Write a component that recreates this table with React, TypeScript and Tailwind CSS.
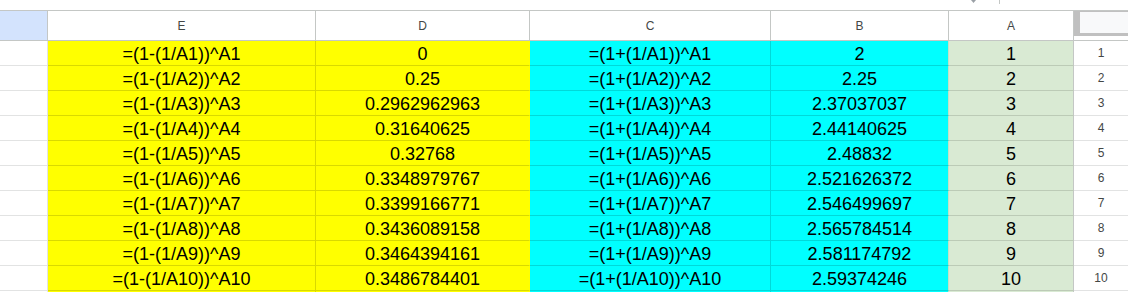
import React from "react";

const dVals = [
  "0",
  "0.25",
  "0.2962962963",
  "0.31640625",
  "0.32768",
  "0.3348979767",
  "0.3399166771",
  "0.3436089158",
  "0.3464394161",
  "0.3486784401",
];
const bVals = [
  "2",
  "2.25",
  "2.37037037",
  "2.44140625",
  "2.48832",
  "2.521626372",
  "2.546499697",
  "2.565784514",
  "2.581174792",
  "2.59374246",
];

const font = { fontFamily: '"Liberation Sans", Arial, sans-serif' };

function Row({ i, last }: { i: number; last?: boolean }) {
  const n = i + 1;
  const txt = "flex justify-center pt-[2px] leading-[22px] text-[18px] text-black whitespace-nowrap";
  return (
    <div className={last ? "flex h-[25px] shrink-0" : "flex h-[25px] shrink-0"}>
      <div className="w-[48px] shrink-0 bg-white border-r border-b border-[#e2e3e3]" />
      <div className={`w-[268px] shrink-0 bg-[#ffff00] border-r border-b border-[#d9d900] ${txt}`}>
        {last ? "" : `=(1-(1/A${n}))^A${n}`}
      </div>
      <div className={`w-[214px] shrink-0 bg-[#ffff00] border-b border-[#d9d900] border-r border-r-[#ffff00] ${txt}`}>
        {last ? "" : dVals[i]}
      </div>
      <div className={`w-[241px] shrink-0 bg-[#00ffff] border-r border-b border-[#00d9d9] ${txt}`}>
        {last ? "" : `=(1+(1/A${n}))^A${n}`}
      </div>
      <div className={`w-[178px] shrink-0 bg-[#00ffff] border-b border-[#00d9d9] border-r border-r-[#c6e0c2] ${txt}`}>
        {last ? "" : bVals[i]}
      </div>
      <div className={`w-[125px] shrink-0 bg-[#d9ead3] border-b border-b-[#bccbb6] border-r border-r-[#c4c7c5] ${txt}`}>
        {last ? "" : String(n)}
      </div>
      <div className="w-[54px] shrink-0 bg-white border-b border-[#e2e3e3] flex items-center justify-center text-[12px] text-[#444746]">
        {last ? "" : String(n)}
      </div>
    </div>
  );
}

export default function App() {
  const head = "shrink-0 h-full border-r border-[#c4c7c5] flex items-center justify-center text-[12px] text-[#444746] bg-white";
  return (
    <div className="w-[1128px] h-[292px] overflow-hidden bg-white flex flex-col" style={font}>
      {/* top strip */}
      <div className="h-[10px] shrink-0 flex items-start">
        <div className="w-[970px] shrink-0" />
        <svg width="7" height="4" viewBox="0 0 7 4" className="shrink-0">
          <path d="M1 0 L6 0 L3.5 3 Z" fill="#9aa0a6" />
        </svg>
        <div className="w-[22px] shrink-0" />
        <div className="w-px h-[4px] bg-[#c4c7c5] shrink-0" />
      </div>
      {/* header */}
      <div className="flex h-[31px] shrink-0 border-t border-b border-[#c4c7c5]">
        <div className="w-[48px] shrink-0 h-full border-r border-[#c4c7c5] bg-[#d3e3fd]" />
        <div className={`w-[268px] ${head}`}>E</div>
        <div className={`w-[214px] ${head}`}>D</div>
        <div className={`w-[241px] ${head}`}>C</div>
        <div className={`w-[178px] ${head}`}>B</div>
        <div className={`w-[125px] ${head}`}>A</div>
        <div className="w-[54px] shrink-0 h-full flex flex-col bg-white">
          <div className="h-[25px] shrink-0 border-l-[6px] border-t border-b-[3px] border-[#c0c0c0] bg-[#f8f9fa]" />
        </div>
      </div>
      {Array.from({ length: 10 }).map((_, i) => (
        <Row key={i} i={i} />
      ))}
      <Row i={10} last />
    </div>
  );
}
